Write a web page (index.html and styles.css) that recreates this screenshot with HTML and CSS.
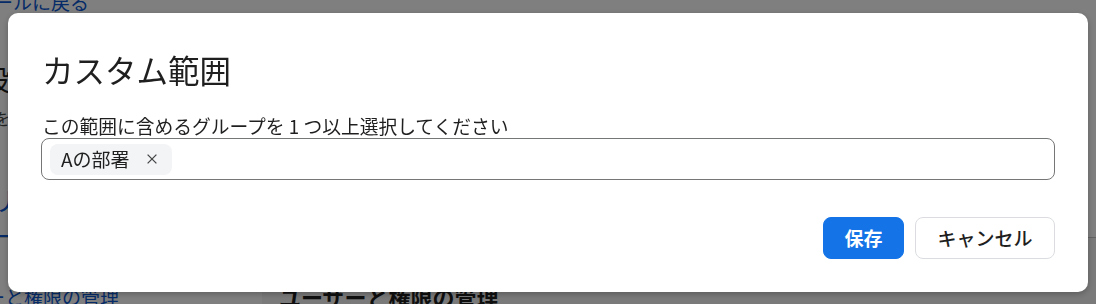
FILE: index.html
```html
<!DOCTYPE html>
<html lang="ja">
<head>
<meta charset="utf-8">
<title>カスタム範囲</title>
<link rel="stylesheet" href="styles.css">
</head>
<body>
<div class="page">
  <header class="page-header">
    <a class="back-link">ールに戻る</a>
    <div class="page-title">設</div>
    <div class="page-desc">を</div>
    <nav class="tabs">
      <span class="tab active">リ</span>
    </nav>
  </header>
  <div class="page-body">
    <aside class="sidebar">
      <a class="side-item">ーと権限の管理</a>
    </aside>
    <main class="main">
      <h2 class="main-title">ユーザーと権限の管理</h2>
    </main>
  </div>
</div>

<div class="scrim">
  <div class="dialog" role="dialog" aria-labelledby="dlg-title">
    <h1 class="dialog-title" id="dlg-title">カスタム範囲</h1>
    <label class="field-label">この範囲に含めるグループを 1 つ以上選択してください</label>
    <div class="chip-input">
      <span class="chip">
        <span class="chip-text">Aの部署</span>
        <span class="chip-remove" aria-label="削除">
          <svg width="10" height="10" viewBox="0 0 10 10"><path d="M0.6 0.6 L9.4 9.4 M9.4 0.6 L0.6 9.4" stroke="#444746" stroke-width="1.3" fill="none"/></svg>
        </span>
      </span>
    </div>
    <div class="actions">
      <button class="btn btn-primary">保存</button>
      <button class="btn btn-secondary">キャンセル</button>
    </div>
  </div>
</div>
</body>
</html>
```
FILE: styles.css
```css
* { box-sizing: border-box; }
html, body { margin: 0; padding: 0; }
body {
  font-family: "Noto Sans CJK JP", "Noto Sans", sans-serif;
  background: #ffffff;
  color: #1f1f1f;
  overflow: hidden;
  width: 1096px;
  height: 304px;
}

/* background page */
.page { width: 1096px; }
.page-header {
  height: 238px;
  border-bottom: 1px solid #c4c7c5;
  display: flex;
  flex-direction: column;
  overflow: hidden;
}
.back-link {
  display: block;
  color: #0b57d0;
  font-size: 19px;
  line-height: 20px;
  margin-top: -8px;
  margin-left: -6px;
}
.page-title {
  font-size: 28px;
  line-height: 34px;
  margin-top: 50px;
  margin-left: -18px;
  color: #1f1f1f;
}
.page-desc {
  font-size: 16px;
  line-height: 20px;
  margin-top: 12px;
  margin-left: -6px;
  color: #444746;
}
.tabs {
  margin-top: auto;
  display: flex;
}
.tab {
  font-size: 26px;
  line-height: 34px;
  padding-bottom: 18px;
  margin-left: -10px;
  padding-right: 20px;
  color: #0b57d0;
  border-bottom: 2px solid #0b57d0;
}
.page-body { display: flex; height: 66px; }
.sidebar { width: 262px; background: #ffffff; padding-top: 47px; }
.side-item {
  display: block;
  color: #0b57d0;
  font-size: 19px;
  line-height: 24px;
  margin-left: -14px;
}
.main { flex: 1; background: #f4f4f4; padding: 44px 0 0 17px; }
.main-title {
  margin: 0;
  font-size: 22px;
  line-height: 28px;
  font-weight: 700;
  color: #1f1f1f;
}

/* overlay */
.scrim {
  position: fixed;
  inset: 0;
  background: rgba(0, 0, 0, 0.5);
  display: flex;
  align-items: flex-start;
  padding: 13px 8px 0 8px;
}
.dialog {
  flex: 1;
  height: 279px;
  background: #ffffff;
  border-radius: 10px;
  box-shadow: 0 2px 6px rgba(0, 0, 0, 0.25);
  padding: 36px 33px 33px 33px;
  display: flex;
  flex-direction: column;
}
.dialog-title {
  margin: 0 0 0 1px;
  font-size: 31.5px;
  line-height: 40px;
  font-weight: 400;
  color: #1f1f1f;
}
.field-label {
  margin-top: 25px;
  margin-left: 1px;
  font-size: 18.75px;
  line-height: 24px;
  color: #1f1f1f;
}
.chip-input {
  height: 42px;
  border: 1px solid #747775;
  border-radius: 8px;
  padding: 5px 8px;
  display: flex;
  align-items: center;
}
.chip {
  height: 31px;
  display: flex;
  align-items: center;
  background: #f3f4f6;
  border-radius: 8px;
  padding: 0 10px 0 11px;
  gap: 12px;
}
.chip-text {
  font-size: 19px;
  line-height: 24px;
  color: #1f1f1f;
}
.chip-remove {
  width: 20px;
  height: 20px;
  display: flex;
  align-items: center;
  justify-content: center;
}
.actions {
  margin-top: auto;
  display: flex;
  justify-content: flex-end;
  gap: 11px;
}
.btn {
  height: 42px;
  border-radius: 8px;
  font-family: "Noto Sans CJK JP", "Noto Sans", sans-serif;
  font-size: 19px;
  line-height: 24px;
  padding: 0;
  white-space: nowrap;
  cursor: pointer;
  display: flex;
  align-items: center;
  justify-content: center;
}
.btn-primary {
  background: #1473e6;
  color: #ffffff;
  border: 1px solid #1473e6;
  font-weight: 700;
  width: 81px;
}
.btn-secondary {
  background: #ffffff;
  color: #1f1f1f;
  border: 1px solid #dadce0;
  font-weight: 500;
  width: 140px;
}
```
